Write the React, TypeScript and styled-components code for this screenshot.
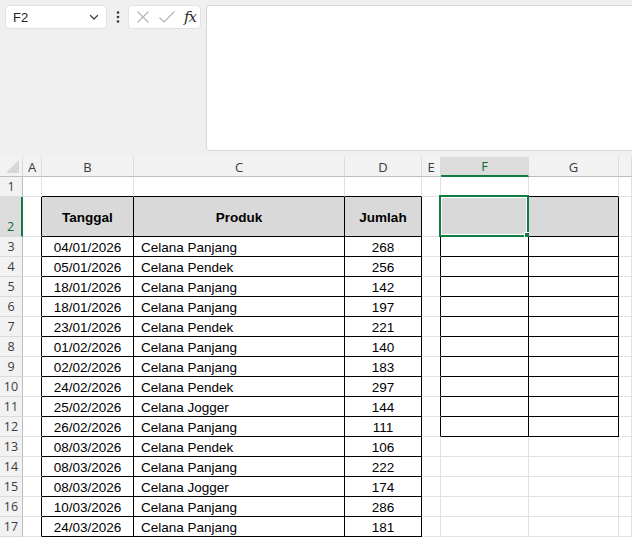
import * as React from 'react'
import styled, { createGlobalStyle, css } from 'styled-components'

const GlobalStyle = createGlobalStyle`
  html, body {
    margin: 0;
    padding: 0;
    background: #f0f0f0;
    overflow: hidden;
  }
  body {
    font-family: "Liberation Sans", Arial, sans-serif;
  }
`

const Page = styled.div`
  width: 632px;
  height: 537px;
  overflow: hidden;
  display: flex;
  flex-direction: column;
`

const TopBar = styled.div`
  height: 157px;
  box-sizing: border-box;
  padding: 5px 0 8px 5px;
  display: flex;
  align-items: flex-start;
  background: #f0f0f0;
`

const NameBox = styled.div`
  width: 102px;
  height: 24px;
  box-sizing: border-box;
  background: #fff;
  border: 1px solid #e2e2e2;
  border-radius: 4px;
  display: flex;
  align-items: center;
  justify-content: space-between;
  padding: 0 6px 0 7px;
  font-size: 13px;
  color: #242424;
`

const Dots = styled.div`
  width: 21px;
  height: 24px;
  display: flex;
  align-items: center;
  justify-content: center;
`

const FxBox = styled.div`
  width: 73px;
  height: 24px;
  box-sizing: border-box;
  background: #fff;
  border: 1px solid #e2e2e2;
  border-radius: 4px;
  display: flex;
  align-items: center;
  justify-content: space-between;
  padding: 0 4px 0 6px;
`

const Fx = styled.span`
  font-family: "DejaVu Serif", "Liberation Serif", serif;
  font-style: italic;
  font-size: 15px;
  color: #2b2b2b;
  letter-spacing: -1px;
`

const FormulaBox = styled.div`
  flex: 1;
  height: 144px;
  margin-left: 5px;
  margin-right: -10px;
  background: #fff;
  border: 1px solid #d6d6d6;
  border-radius: 4px;
`

const Sheet = styled.div`
  display: grid;
  grid-template-columns: 23px 19px 92px 211px 77px 19px 88px 90px 1fr;
  grid-template-rows: 20px 20px 40px repeat(15, 20px);
  background: #fff;
`

const HeadCell = styled.div<{ $active?: boolean }>`
  box-sizing: border-box;
  background: #f2f2f2;
  border-right: 1px solid #dadada;
  border-bottom: 1px solid #bdbdbd;
  display: flex;
  align-items: center;
  justify-content: center;
  font-family: "Open Sans", "Liberation Sans", sans-serif;
  font-size: 13px;
  color: #3b3b3b;
  position: relative;
  ${(p) =>
    p.$active &&
    css`
      background: #dcdcdc;
      color: #0e6b34;
      border-bottom: 2px solid #107c41;
    `}
`

const Corner = styled.span`
  position: absolute;
  right: 3px;
  bottom: 3px;
  width: 0;
  height: 0;
  border-left: 13px solid transparent;
  border-bottom: 13px solid #d6d6d6;
`

const RowHead = styled.div<{ $active?: boolean }>`
  box-sizing: border-box;
  background: #f2f2f2;
  border-right: 1px solid #bdbdbd;
  border-bottom: 1px solid #dadada;
  display: flex;
  align-items: flex-end;
  justify-content: center;
  padding-bottom: 1px;
  font-family: "Open Sans", "Liberation Sans", sans-serif;
  font-size: 12.5px;
  color: #3b3b3b;
  ${(p) =>
    p.$active &&
    css`
      background: #dcdcdc;
      color: #0e6b34;
      border-right: 2px solid #107c41;
    `}
`

const Cell = styled.div<{
  $fill?: boolean
  $right?: boolean
  $bottom?: boolean
  $align?: 'left' | 'center'
  $bold?: boolean
}>`
  box-sizing: border-box;
  position: relative;
  background: ${(p) => (p.$fill ? '#d9d9d9' : '#fff')};
  border-right: 1px solid ${(p) => (p.$right ? '#000' : '#e1e1e1')};
  border-bottom: 1px solid ${(p) => (p.$bottom ? '#000' : '#e1e1e1')};
  display: flex;
  align-items: center;
  justify-content: ${(p) => (p.$align === 'left' ? 'flex-start' : 'center')};
  padding: ${(p) => (p.$align === 'left' ? '2px 0 0 7px' : '2px 0 0 0')};
  font-size: 13.5px;
  font-weight: ${(p) => (p.$bold ? 700 : 400)};
  color: #000;
  white-space: nowrap;
`

const Selection = styled.div`
  position: absolute;
  left: -2px;
  top: -2px;
  right: -1px;
  bottom: -1px;
  border: 2px solid #107c41;
  box-shadow: inset 0 0 0 1px #fff;
  pointer-events: none;
`

const Handle = styled.div`
  position: absolute;
  right: -4px;
  bottom: -4px;
  width: 5px;
  height: 5px;
  background: #107c41;
  border: 1px solid #fff;
`

const data: [string, string, number][] = [
  ['04/01/2026', 'Celana Panjang', 268],
  ['05/01/2026', 'Celana Pendek', 256],
  ['18/01/2026', 'Celana Panjang', 142],
  ['18/01/2026', 'Celana Panjang', 197],
  ['23/01/2026', 'Celana Pendek', 221],
  ['01/02/2026', 'Celana Panjang', 140],
  ['02/02/2026', 'Celana Panjang', 183],
  ['24/02/2026', 'Celana Pendek', 297],
  ['25/02/2026', 'Celana Jogger', 144],
  ['26/02/2026', 'Celana Panjang', 111],
  ['08/03/2026', 'Celana Pendek', 106],
  ['08/03/2026', 'Celana Panjang', 222],
  ['08/03/2026', 'Celana Jogger', 174],
  ['10/03/2026', 'Celana Panjang', 286],
  ['24/03/2026', 'Celana Panjang', 181],
]

const cols = ['A', 'B', 'C', 'D', 'E', 'F', 'G', '']

// row 1..17, col index 0..7 (A..H)
const inTable = (r: number, c: number) =>
  (r >= 2 && r <= 17 && c >= 1 && c <= 3) || (r >= 2 && r <= 12 && c >= 5 && c <= 6)

const cellText = (r: number, c: number): string => {
  if (r === 2) {
    if (c === 1) return 'Tanggal'
    if (c === 2) return 'Produk'
    if (c === 3) return 'Jumlah'
    return ''
  }
  const d = data[r - 3]
  if (!d) return ''
  if (c === 1) return d[0]
  if (c === 2) return d[1]
  if (c === 3) return String(d[2])
  return ''
}

const ChevronDown = () => (
  <svg width="12" height="12" viewBox="0 0 12 12">
    <path d="M2.5 4.5 L6 8 L9.5 4.5" fill="none" stroke="#424242" strokeWidth="1.3" strokeLinecap="round" />
  </svg>
)

const VDots = () => (
  <svg width="4" height="14" viewBox="0 0 4 14">
    <circle cx="2" cy="2.5" r="1.3" fill="#333" />
    <circle cx="2" cy="7" r="1.3" fill="#333" />
    <circle cx="2" cy="11.5" r="1.3" fill="#333" />
  </svg>
)

const CrossIcon = () => (
  <svg width="16" height="16" viewBox="0 0 16 16">
    <path d="M2.5 2.5 L13.5 13.5 M13.5 2.5 L2.5 13.5" stroke="#b4b4b4" strokeWidth="1.1" />
  </svg>
)

const CheckIcon = () => (
  <svg width="18" height="16" viewBox="0 0 18 16">
    <path d="M1.5 8.5 L6 13 L16.5 2.5" fill="none" stroke="#b4b4b4" strokeWidth="1.1" />
  </svg>
)

export default function App() {
  const rows = []
  for (let r = 1; r <= 17; r++) {
    rows.push(
      <RowHead key={`h${r}`} $active={r === 2}>
        {r}
      </RowHead>
    )
    for (let c = 0; c < 8; c++) {
      const inside = inTable(r, c)
      const right = inside || inTable(r, c + 1)
      const bottom = inside || inTable(r + 1, c)
      const selected = r === 2 && c === 5
      rows.push(
        <Cell
          key={`${r}-${c}`}
          $fill={r === 2 && inside}
          $right={right}
          $bottom={bottom}
          $align={c === 2 && r > 2 ? 'left' : 'center'}
          $bold={r === 2}
        >
          {cellText(r, c)}
          {selected && (
            <Selection>
              <Handle />
            </Selection>
          )}
        </Cell>
      )
    }
  }

  return (
    <Page>
      <GlobalStyle />
      <TopBar>
        <NameBox>
          <span>F2</span>
          <ChevronDown />
        </NameBox>
        <Dots>
          <VDots />
        </Dots>
        <FxBox>
          <CrossIcon />
          <CheckIcon />
          <Fx>fx</Fx>
        </FxBox>
        <FormulaBox />
      </TopBar>
      <Sheet>
        <HeadCell>
          <Corner />
        </HeadCell>
        {cols.map((c) => (
          <HeadCell key={c || 'H'} $active={c === 'F'}>
            {c}
          </HeadCell>
        ))}
        {rows}
      </Sheet>
    </Page>
  )
}
